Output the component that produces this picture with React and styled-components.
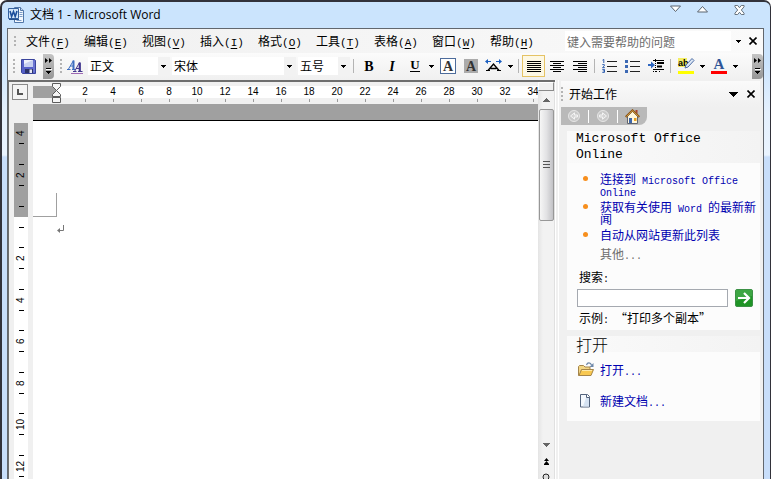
import React, { useState } from 'react';
import styled, { createGlobalStyle, css } from 'styled-components';

const GlobalStyle = createGlobalStyle`
    * {
        margin: 0;
        padding: 0;
        box-sizing: border-box;
    }

    body {
        background: white;
        color: black;
        font-family: 'Noto Sans CJK SC', sans-serif;
        font-size: 12px;
        line-height: 16px;
    }

    button, input, select {
        font: inherit;
        color: inherit;
        border: 0;
        background: none;
        outline: none;
    }

    a {
        color: inherit;
        text-decoration: none;
    }

    svg {
        display: block;
        flex: none;
    }
`;

const Latin = styled.span`
    font-family: 'Liberation Mono', monospace;
    font-size: ${(props) => props.$size || 10}px;
    line-height: 0;
`;

/* ---------- window frame ---------- */

const Window = styled.div`
    display: flex;
    flex-direction: column;
    height: calc(100vh - 19px);
    min-height: 300px;
    padding: 0 6px 0 5px;
    overflow: hidden;
    border: solid #32323a;
    border-width: 2px 1px 0 2px;
    border-radius: 7px 7px 0 0;
    background: linear-gradient(#cbe4fd 0, #cbe4fd 60px, #e4f0fd 110px, #e9f3fe 153px, #c8defa 155px);
`;

const TitleBar = styled.header`
    display: flex;
    align-items: flex-start;
    height: 26px;
    flex: none;
`;

const Title = styled.h1`
    flex: 1;
    display: flex;
    align-items: center;
    gap: 6px;
    height: 26px;
    padding-left: 1px;
    font-family: 'Open Sans', 'Noto Sans CJK SC', sans-serif;
    font-size: 12px;
    font-weight: 400;
`;

const WindowButtons = styled.div`
    display: flex;
    gap: 14px;
    padding-right: 18px;
`;

const WindowButton = styled.button`
    display: flex;
    justify-content: center;
    width: 13px;
    padding-top: 3px;

    &:last-child {
        margin-left: 10px;
    }
`;

const Client = styled.div`
    flex: 1;
    min-height: 0;
    display: flex;
    flex-direction: column;
    border: 1px solid #62676e;
    border-bottom: 0;
    background: #f0f0f0;
`;

/* ---------- menu and toolbar ---------- */

const MenuBar = styled.nav`
    display: flex;
    align-items: center;
    flex: none;
    height: 24px;
    padding: 0 2px 0 6px;
    background: linear-gradient(90deg, #f0f0f0, #fafafa);
`;

const Menus = styled.div`
    flex: 1;
    display: flex;
    margin-left: 9px;
`;

const MenuButton = styled.button`
    width: 58px;
    text-align: left;
    white-space: nowrap;

    u {
        text-underline-offset: 2px;
    }
`;

const HelpBox = styled.input`
    width: 166px;
    height: 20px;
    padding: 0 2px;
    background: white;

    &::placeholder {
        color: #6d6d6d;
        opacity: 1;
    }
`;

const ToolBar = styled.div`
    display: flex;
    align-items: center;
    flex: none;
    height: 27px;
    padding: 0 0 1px 5px;
    background: linear-gradient(#fbfbfb, #f0f0f0);
`;

const ToolButton = styled.button`
    display: flex;
    align-items: center;
    justify-content: center;
    flex: none;
    width: ${(props) => props.$width || 23}px;
    height: 22px;
    ${(props) => props.$active && css`
        border: 1px solid #e5c365;
        background: #fdf8e4;
    `}
`;

const Overflow = styled.button`
    display: flex;
    flex-direction: column;
    align-items: center;
    justify-content: space-between;
    flex: none;
    width: 11px;
    height: 25px;
    padding: 4px 0;
    border-radius: 0 4px 4px 0;
    background: linear-gradient(#c4c4c4, #969696);
`;

const Spacer = styled.span`
    flex: ${(props) => (props.$width ? 'none' : 1)};
    width: ${(props) => props.$width || 0}px;
`;

const Separator = styled.span`
    flex: none;
    width: 1px;
    height: 14px;
    margin: 0 3px;
    background: #b4b4b4;
`;

const Combo = styled.label`
    position: relative;
    flex: none;
    width: ${(props) => props.$width}px;
    height: 18px;
    margin-right: 2px;
    background: linear-gradient(90deg, white calc(100% - 12px), #f2f2f2 0);

    &:last-of-type {
        margin-right: 0;
    }

    select {
        width: 100%;
        height: 18px;
        padding-left: 2px;
        appearance: none;
    }

    svg {
        position: absolute;
        right: 4px;
        top: 8px;
        pointer-events: none;
    }
`;

/* ---------- document ---------- */

const Main = styled.main`
    flex: 1;
    min-height: 0;
    display: flex;
`;

const Editor = styled.section`
    flex: 1;
    min-width: 0;
    display: flex;
    border: solid #6e6e6e;
    border-width: 2px 0 0 1px;
`;

const RulerColumn = styled.div`
    display: flex;
    flex-direction: column;
    align-items: center;
    flex: none;
    width: 24px;
    padding: 2px 5px 0 3px;
`;

const TabStop = styled.button`
    display: flex;
    align-items: center;
    justify-content: center;
    flex: none;
    width: 16px;
    height: 16px;
    border: 1px solid #8a8a8a;
    background: #f4f4f4;
`;

const VerticalRuler = styled.div`
    flex: 1;
    min-height: 0;
    align-self: flex-end;
    display: grid;
    grid-template-rows: 31px 42px;
    grid-auto-rows: 42px 41px;
    width: 14px;
    margin-top: 23px;
    overflow: hidden;
    background: white;
    font: 10px/10px 'Liberation Sans', sans-serif;
`;

const VerticalMark = styled.div`
    display: flex;
    flex-direction: column;
    align-items: center;
    justify-content: flex-end;
    gap: 3px;
    padding-bottom: 10px;
    background: ${(props) => props.$shade};

    span {
        height: 14px;
        width: 10px;
        text-align: center;
        writing-mode: vertical-rl;
        transform: rotate(180deg);
    }

    &::before,
    &::after {
        content: '';
        flex: none;
        width: 5px;
        height: 1px;
        background: black;
    }

    &:first-child::before {
        display: none;
    }
`;

const PageColumn = styled.div`
    flex: 1;
    min-width: 0;
    display: flex;
    flex-direction: column;
    background: white;
`;

const HorizontalRuler = styled.div`
    display: flex;
    flex: none;
    height: 22px;
    padding-top: 4px;
    overflow: hidden;
    background: linear-gradient(#f0f0f0 4px, white 4px, white 16px, #f0f0f0 16px);
    font: 10px/12px 'Liberation Sans', sans-serif;
`;

const RulerMargin = styled.div`
    flex: none;
    display: flex;
    justify-content: flex-end;
    width: 38px;
    height: 12px;
    padding-right: 10px;
    background: linear-gradient(90deg, #a0a0a0 24px, white 24px);

    svg {
        margin-top: -3px;
    }
`;

const HorizontalMark = styled.div`
    flex: none;
    width: 28px;
    text-align: center;

    &::after {
        content: '';
        display: block;
        width: 1px;
        height: 3px;
        margin: 1px auto 0;
        background: #9a9a9a;
    }
`;

const PageGap = styled.div`
    flex: none;
    height: 17px;
    border-bottom: 1px solid black;
    background: #a0a0a0;
`;

const Page = styled.article`
    flex: 1;
    padding-top: 72px;
`;

const CropMark = styled.div`
    width: 24px;
    height: 24px;
    margin-bottom: 8px;
    border: solid #a0a0a0;
    border-width: 0 1px 1px 0;
`;

const Paragraph = styled.p`
    padding-left: 24px;
`;

const ScrollBar = styled.div`
    flex: none;
    display: flex;
    flex-direction: column;
    align-items: center;
    width: 17px;
    overflow: hidden;
    border-right: 1px solid #e0e0e0;
    background: linear-gradient(90deg, #e4e4e4, #f2f2f2 5px);
`;

const SplitHandle = styled.div`
    flex: none;
    width: 16px;
    height: 9px;
    border: 1px solid #8a8a8a;
    border-top-color: white;
    border-left-color: white;
    background: #f0f0f0;
`;

const ScrollButton = styled.button`
    display: flex;
    align-items: center;
    justify-content: center;
    flex: none;
    width: 16px;
    height: ${(props) => props.$height || 17}px;
`;

const ScrollTrack = styled.div`
    flex: 1;
    min-height: 0;
`;

const Thumb = styled.div`
    display: flex;
    align-items: center;
    justify-content: center;
    width: 15px;
    height: 112px;
    border: 1px solid #979797;
    border-radius: 2px;
    background: linear-gradient(90deg, #f6f6f6, #e2e2e4 50%, #c2c2c6);
`;

/* ---------- task pane ---------- */

const Pane = styled.aside`
    flex: none;
    width: 208px;
    padding: 1px 3px 0 5px;
    border-left: 1px solid white;
    background: linear-gradient(90deg, #f0f0f0 2px, white 2px, white 3px, #f0f0f0 3px);
    overflow: hidden;
`;

const PaneHeader = styled.div`
    display: flex;
    align-items: center;
    height: 26px;
    padding-right: 1px;
    background: linear-gradient(#fafafa, #f0f0f0);
`;

const PaneTitle = styled.h2`
    flex: 1;
    margin-left: 5px;
    font-size: 12px;
    font-weight: 400;
`;

const PaneNav = styled.div`
    display: flex;
    align-items: center;
    width: 86px;
    height: 18px;
    padding-left: 6px;
    border-radius: 0 0 8px 0;
    background: #b9b9b9;
    gap: 7px;
`;

const NavDivider = styled.span`
    width: 1px;
    height: 13px;
    background: white;
`;

const NavButton = styled.button`
    display: flex;
    align-items: center;
    justify-content: center;
    width: 14px;
`;

const Panel = styled.section`
    margin: 6px 0 0 6px;
`;

const PanelTitle = styled.h3`
    padding: 0 20px 0 9px;
    background: linear-gradient(90deg, #fafafa, #f3f3f3);
    font-size: 16px;
    font-weight: 300;
    line-height: 16px;
    ${(props) => props.$latin && css`
        font-family: 'Liberation Mono', monospace;
        font-size: 13px;
        font-weight: 400;
    `}
`;

const PanelBody = styled.div`
    padding: ${(props) => props.$padding};
    background: #fcfcfc;
    line-height: 12px;
`;

const Links = styled.ul`
    display: grid;
    gap: ${(props) => props.$gap}px;
    list-style: none;
`;

const LinkRow = styled.li`
    display: flex;
    align-items: ${(props) => (props.$icon ? 'center' : 'flex-start')};
    gap: ${(props) => (props.$icon ? 6 : 12)}px;
    height: ${(props) => (props.$icon ? '15px' : 'auto')};
    padding-left: ${(props) => (props.$icon ? 10 : 16)}px;
    color: #0000b0;

    a {
        flex: 1;
    }
`;

const Dot = styled.span`
    flex: none;
    width: 5px;
    height: 5px;
    margin-top: 3px;
    border-radius: 50%;
    background: #f78f1e;
`;

const More = styled.a`
    display: block;
    margin: 7px 0 11px 33px;

    && {
        color: #6d6d6d;
    }
`;

const SearchForm = styled.form`
    padding: 0 7px 0 10px;

    label, p {
        display: block;
        padding-left: 2px;
    }
`;

const SearchRow = styled.div`
    display: flex;
    gap: 7px;
    margin: 6px 0 5px;

    input {
        flex: 1;
        min-width: 0;
        height: 18px;
        padding: 0 2px;
        border: 1px solid #a5a9b0;
        background: white;
    }
`;

/* ---------- icons ---------- */

const Arrow = ({ w = 5, up, fill = 'black' }) => {
    const h = Math.ceil(w / 2);
    return (
        <svg width={w} height={h} viewBox={`0 0 ${w} ${h}`} shapeRendering="crispEdges">
            <path d={up ? `M0 ${h}H${w}L${w / 2} 0Z` : `M0 0H${w}L${w / 2} ${h}Z`} fill={fill} />
        </svg>
    );
};

const Cross = () => (
    <svg width="8" height="8" viewBox="0 0 8 8">
        <path d="M.5.5l7 7M7.5.5l-7 7" stroke="black" strokeWidth="1.6" />
    </svg>
);

const Grip = ({ rows = 4 }) => (
    <svg width="3" height={rows * 4 - 1} shapeRendering="crispEdges">
        {Array.from({ length: rows }, (_, i) => (
            <rect key={i} y={i * 4} width="2" height="2" fill="#b4b4b4" />
        ))}
    </svg>
);

const OverflowMarks = () => (
    <>
        <svg width="8" height="5" viewBox="0 0 8 5">
            <path d="M0 0v5l3-2.5zM4 0v5l3-2.5z" fill="black" />
        </svg>
        <svg width="7" height="8" viewBox="0 0 7 8" shapeRendering="crispEdges">
            <path d="M1 1h5v1H1zM1 4h5L3.500 7z" fill="black" />
            <path d="M1 2h6v1H1z" fill="white" />
        </svg>
    </>
);

const WordLogo = () => (
    <svg width="16" height="16" viewBox="0 0 16 16">
        <path d="M6.500.5h6l3 3v12h-9z" fill="#f4f8fd" stroke="#5277a8" />
        <path d="M12.500.5v3h3" fill="#c5d8ee" stroke="#5277a8" />
        <path d="M11.500 5.500h3M11.500 7.500h3M11.500 9.500h3M8.500 13.500h5" stroke="#7b9cc8" />
        <path d="M.5 1.500h10v10H.5z" fill="#d4e6f8" stroke="#35619f" />
        <path d="M2 4l1.600 5.500L5.500 4.500l1.700 5L9 4" fill="none" stroke="#1d4f9c" strokeWidth="1.600" />
        <path d="M1 12.500h10" stroke="#27508c" />
    </svg>
);

const SaveIcon = () => (
    <svg width="15" height="15" viewBox="0 0 15 15">
        <path d="M.5.5h13l1 1v13H1.500l-1-1z" fill="#5560c8" stroke="#3a449c" />
        <path d="M3 1h9v7H3z" fill="#eef1fb" />
        <path d="M3 5l9-4v7H3z" fill="#c6cff0" />
        <path d="M4 10h8v4H4z" fill="#2c3468" />
        <path d="M8.500 10.500h2.500V14H8.500z" fill="#e6e8f4" />
        <path d="M13 1.500v12" stroke="#8189dc" />
    </svg>
);

const StylesIcon = () => (
    <svg width="16" height="15" viewBox="0 0 16 15">
        <g fill="none" stroke="#3f6fc0">
            <path d="M1.500 10L6.500 1.500" />
            <path d="M6.500 1.500V10" strokeWidth="2" />
            <path d="M3 7h3.500M0 10.500h3.500M5 10.500h3" />
        </g>
        <g fill="none" stroke="#43388f">
            <path d="M7.500 12.500L12.500 3.500" />
            <path d="M12.800 3.500V12" strokeWidth="2.200" />
            <path d="M9 9.500h4M6 12.500h3.500M11 12.500h4.500" />
        </g>
        <path d="M4 14.500h12" stroke="#a06ab4" />
    </svg>
);

const Letter = ({ children, frame, shade, bar, color = 'black', italic, underline, size = 14 }) => (
    <svg width="18" height="18" viewBox="0 0 18 18">
        {frame && <rect x="1.500" y="1.500" width="15" height="15" fill="white" stroke="#4d6c9c" />}
        {shade && <rect x="2" y="2" width="14" height="14" fill="#ababab" />}
        <text
            x="9"
            y={bar || underline ? 12 : 14}
            textAnchor="middle"
            fontFamily="Liberation Serif, serif"
            fontSize={size}
            fontWeight="700"
            fontStyle={italic ? 'italic' : 'normal'}
            fill={color}
        >
            {children}
        </text>
        {underline && <path d="M4 14.500h10" stroke="black" />}
        {bar && <path d="M1 15.500h16" stroke="#f00" strokeWidth="3" />}
    </svg>
);

const ScaleIcon = () => (
    <svg width="17" height="14" viewBox="0 0 17 14">
        <path d="M3 11.500L8.500 5l5.500 6.500M5.500 9.500h6" fill="none" stroke="black" strokeWidth="1.400" />
        <path d="M1 11.500h4M12 11.500h4" stroke="black" />
        <path d="M1 2.500h5M11 2.500h5" stroke="#1b5fc0" />
        <path d="M0 2.500L3 0v5zM17 2.500L14 0v5z" fill="#1b5fc0" />
    </svg>
);

const AlignIcon = ({ short, right }) => (
    <svg width="14" height="11" viewBox="0 0 14 11" shapeRendering="crispEdges">
        {[0, 1, 2, 3, 4, 5].map((i) => {
            const w = i % 2 ? short : 14;
            const x = right ? 14 - w : (14 - w) / 2;
            return <rect key={i} x={x} y={i * 2} width={w} height="1" fill="black" />;
        })}
    </svg>
);

const ListIcon = ({ numbered }) => (
    <svg width="15" height="14" viewBox="0 0 15 14">
        <path d="M5 2.500h10M5 7.500h10M5 12.500h10" stroke="#222" />
        {numbered ? (
            <path
                d="M.5 1.200L1.800.4V4M.3 5.600h2v1.300L.5 8.600h2.300M.3 10.400h2.200v3H.3M.8 11.900h1.500"
                fill="none"
                stroke="#2f5fb0"
            />
        ) : (
            <path d="M0 1h3v3H0zM0 6h3v3H0zM0 11h3v3H0z" fill="#3c69b4" />
        )}
    </svg>
);

const IndentIcon = () => (
    <svg width="16" height="14" viewBox="0 0 16 14">
        <path d="M5 1.500h11M5 10.500h11" stroke="black" />
        <path d="M9 4h7M9 7.500h5" stroke="black" strokeWidth="2" />
        <path d="M5 12.500h2M8 12.500h2M11 12.500h2M7.500 0v14" stroke="black" strokeDasharray="1 1" />
        <path d="M0 5h3V2.500L7 6 3 9.500V7H0z" fill="#2f67c0" />
    </svg>
);

const HighlightIcon = () => (
    <svg width="18" height="18" viewBox="0 0 18 18">
        <rect x="1" y="1" width="9" height="9" fill="#f4ee62" />
        <text x="1" y="9" fontFamily="Liberation Sans, sans-serif" fontSize="9" fontWeight="700">ab</text>
        <path d="M15 1.500l2 2-6 6.500-3 1 1-3z" fill="#dbe6f4" stroke="#4d6ea6" />
        <path d="M1 15.500h16" stroke="#ff0" strokeWidth="3" />
    </svg>
);

const IndentMarker = () => (
    <svg width="9" height="21" viewBox="0 0 9 21" style={{ overflow: 'visible' }}>
        <path
            d="M.5.5h8v3L4.500 7.500.5 3.500zM.5 13.500v-2l4-4 4 4v2zM.5 14.500h8v5h-8z"
            fill="#f6f6f6"
            stroke="#5c5c5c"
        />
    </svg>
);

const RoundArrow = ({ flip }) => (
    <svg width="14" height="14" viewBox="0 0 14 14">
        <circle cx="7" cy="7" r="5.500" fill="#c9c9c9" stroke="#e6e6e6" />
        <path
            d={flip ? 'M3.500 6h3V3.800L10.500 7l-4 3.200V8h-3z' : 'M10.500 6h-3V3.800L3.500 7l4 3.200V8h3z'}
            fill="#d4d4d4"
            stroke="#f4f4f4"
        />
    </svg>
);

const HomeIcon = () => (
    <svg width="15" height="15" viewBox="0 0 15 15">
        <path d="M2.500 7v7.500h10V7L7.500 2.500z" fill="#fff6dc" stroke="#5f6470" />
        <path d="M10.500 1h2v4l-2-2z" fill="#a8402c" />
        <path d="M.7 8L7.500 1.300 14.300 8" fill="none" stroke="#8a5518" strokeWidth="2" />
        <path d="M1.500 7.500L7.500 1.800l6 5.700" fill="none" stroke="#e8b24c" strokeWidth=".8" />
        <path d="M4 9h3v5H4z" fill="#3c64a8" />
        <path d="M9 9h2.500v3H9z" fill="#e8a020" />
    </svg>
);

const FolderIcon = () => (
    <svg width="17" height="15" viewBox="0 0 17 15">
        <path d="M1.500 13.500V4.500l1-1h4l1.500 1.500h5v8.500z" fill="#f3d684" stroke="#a5854a" />
        <path d="M2 13.500l2.500-6h12l-2.500 6z" fill="#f8c850" stroke="#a5854a" />
        <path d="M5 8.500h10" stroke="#fde9a8" />
        <path d="M9.500 3c1-3 4-2.500 5 0" fill="none" stroke="#6c86a8" strokeWidth="1.200" />
        <path d="M16.500 1v4h-4z" fill="#6c86a8" />
    </svg>
);

const NewDocIcon = () => (
    <svg width="17" height="15" viewBox="0 0 17 15">
        <path d="M3.500 1.500h7l2 2v10.500h-9z" fill="#f4f8fd" stroke="#53637c" />
        <path d="M9 5h3v8.500H6z" fill="#d5e2f2" />
        <path d="M9.500 1.500v3h3" fill="white" stroke="#53637c" />
    </svg>
);

const GoIcon = () => (
    <svg width="18" height="18" viewBox="0 0 18 18">
        <rect x=".5" y=".5" width="17" height="17" rx="1.500" fill="#1f9426" stroke="#3c9146" />
        <path d="M1 1h16v6L1 12z" fill="#5cb860" opacity=".5" />
        <path d="M3 9h10.500M9 4l5 5-5 5" fill="none" stroke="white" strokeWidth="2.200" />
    </svg>
);

const ReturnMark = () => (
    <svg width="8" height="8" viewBox="0 0 8 8">
        <path d="M6.500 0v5.500H2" fill="none" stroke="#777" />
        <path d="M0 5.500L3 3v5z" fill="#777" />
    </svg>
);

/* ---------- data ---------- */

const menus = [
    ['文件', 'F'],
    ['编辑', 'E'],
    ['视图', 'V'],
    ['插入', 'I'],
    ['格式', 'O'],
    ['工具', 'T'],
    ['表格', 'A'],
    ['窗口', 'W'],
    ['帮助', 'H'],
];

const columns = Array.from({ length: 17 }, (_, i) => (i + 1) * 2);

const rows = [
    { label: '4', shade: '#a0a0a0' },
    { label: '2', shade: '#a0a0a0' },
    { label: '', shade: 'linear-gradient(#a0a0a0 50%, white 50%)' },
    ...[2, 4, 6, 8, 10, 12].map((label) => ({ label, shade: 'white' })),
];

const ComboBox = ({ label, width, options }) => (
    <Combo $width={width}>
        <select aria-label={label}>
            {options.map((option) => <option key={option}>{option}</option>)}
        </select>
        <Arrow />
    </Combo>
);

const App = () => {
    const [align, setAlign] = useState('justify');
    const [query, setQuery] = useState('');

    return (
        <>
            <GlobalStyle />
            <Window>
                <TitleBar>
                    <Title>
                        <WordLogo />
                        文档 1 - Microsoft Word
                    </Title>
                    <WindowButtons>
                        <WindowButton aria-label="最小化">
                            <svg width="13" height="8" viewBox="0 0 13 8">
                                <path d="M1.500 1h10l-5 5.500z" fill="white" stroke="#5b6470" />
                            </svg>
                        </WindowButton>
                        <WindowButton aria-label="最大化">
                            <svg width="13" height="8" viewBox="0 0 13 8">
                                <path d="M1.500 7h10l-5-5.500z" fill="white" stroke="#5b6470" />
                            </svg>
                        </WindowButton>
                        <WindowButton aria-label="关闭">
                            <svg width="11" height="10" viewBox="0 0 11 11">
                                <path
                                    d="M.5.5h3l2 2.500 2-2.500h3v1.500L7.500 5.500l3 3.500v1.500h-3l-2-2.500-2 2.500h-3V9l3-3.500-3-3.500z"
                                    fill="white"
                                    stroke="#5b6470"
                                />
                            </svg>
                        </WindowButton>
                    </WindowButtons>
                </TitleBar>

                <Client>
                    <MenuBar>
                        <Grip rows={3} />
                        <Menus>
                            {menus.map(([name, key]) => (
                                <MenuButton key={key}>
                                    {name}<Latin $size={11}>(<u>{key}</u>)</Latin>
                                </MenuButton>
                            ))}
                        </Menus>
                        <HelpBox aria-label="帮助" placeholder="键入需要帮助的问题" />
                        <ToolButton $width={14} aria-label="更多"><Arrow /></ToolButton>
                        <ToolButton $width={16} aria-label="关闭文档"><Cross /></ToolButton>
                    </MenuBar>

                    <ToolBar>
                        <Grip />
                        <Spacer $width={1} />
                        <ToolButton aria-label="保存"><SaveIcon /></ToolButton>
                        <Spacer $width={3} />
                        <Overflow aria-label="工具栏选项"><OverflowMarks /></Overflow>
                        <Spacer $width={6} />
                        <Grip />
                        <ToolButton aria-label="样式和格式"><StylesIcon /></ToolButton>
                        <Spacer $width={2} />
                        <ComboBox label="样式" width={82} options={['正文', '标题 1', '标题 2']} />
                        <ComboBox label="字体" width={124} options={['宋体', '黑体', '楷体']} />
                        <ComboBox label="字号" width={52} options={['五号', '小四', '四号']} />
                        <Separator />
                        <ToolButton aria-label="加粗"><Letter>B</Letter></ToolButton>
                        <ToolButton aria-label="倾斜"><Letter italic>I</Letter></ToolButton>
                        <ToolButton aria-label="下划线"><Letter underline size={13}>U</Letter></ToolButton>
                        <ToolButton $width={10} aria-label="下划线样式"><Arrow /></ToolButton>
                        <ToolButton aria-label="字符边框"><Letter frame color="#333">A</Letter></ToolButton>
                        <ToolButton aria-label="字符底纹"><Letter shade color="#333">A</Letter></ToolButton>
                        <ToolButton aria-label="字符缩放"><ScaleIcon /></ToolButton>
                        <ToolButton $width={10} aria-label="缩放比例"><Arrow /></ToolButton>
                        <Separator />
                        <ToolButton
                            aria-label="两端对齐"
                            $active={align === 'justify'}
                            onClick={() => setAlign('justify')}
                        >
                            <AlignIcon short={14} />
                        </ToolButton>
                        <ToolButton
                            aria-label="居中"
                            $active={align === 'center'}
                            onClick={() => setAlign('center')}
                        >
                            <AlignIcon short={8} />
                        </ToolButton>
                        <ToolButton
                            aria-label="右对齐"
                            $active={align === 'right'}
                            onClick={() => setAlign('right')}
                        >
                            <AlignIcon short={9} right />
                        </ToolButton>
                        <Separator />
                        <ToolButton aria-label="编号"><ListIcon numbered /></ToolButton>
                        <ToolButton aria-label="项目符号"><ListIcon /></ToolButton>
                        <ToolButton aria-label="增加缩进量"><IndentIcon /></ToolButton>
                        <Separator />
                        <ToolButton aria-label="突出显示"><HighlightIcon /></ToolButton>
                        <ToolButton $width={10} aria-label="突出显示颜色"><Arrow /></ToolButton>
                        <ToolButton aria-label="字体颜色"><Letter bar size={15} color="#2f5597">A</Letter></ToolButton>
                        <ToolButton $width={10} aria-label="选择字体颜色"><Arrow /></ToolButton>
                        <Spacer />
                        <Overflow aria-label="格式栏选项"><OverflowMarks /></Overflow>
                    </ToolBar>

                    <Main>
                        <Editor>
                            <RulerColumn>
                                <TabStop aria-label="制表符">
                                    <svg width="6" height="6" viewBox="0 0 6 6">
                                        <path d="M1 0v5h5" fill="none" stroke="#555" strokeWidth="2" />
                                    </svg>
                                </TabStop>
                                <VerticalRuler>
                                    {rows.map((row, i) => (
                                        <VerticalMark key={i} $shade={row.shade}>
                                            <span>{row.label}</span>
                                        </VerticalMark>
                                    ))}
                                </VerticalRuler>
                            </RulerColumn>
                            <PageColumn>
                                <HorizontalRuler>
                                    <RulerMargin><IndentMarker /></RulerMargin>
                                    {columns.map((n) => <HorizontalMark key={n}>{n}</HorizontalMark>)}
                                </HorizontalRuler>
                                <PageGap />
                                <Page>
                                    <CropMark />
                                    <Paragraph><ReturnMark /></Paragraph>
                                </Page>
                            </PageColumn>
                            <ScrollBar>
                                <SplitHandle />
                                <ScrollButton $height={18} aria-label="向上滚动"><Arrow w={7} up fill="#666" /></ScrollButton>
                                <ScrollTrack>
                                    <Thumb>
                                        <svg width="7" height="8" shapeRendering="crispEdges">
                                            <path d="M0 .5h7M0 3.500h7M0 6.500h7" stroke="#555" />
                                        </svg>
                                    </Thumb>
                                </ScrollTrack>
                                <ScrollButton aria-label="向下滚动"><Arrow w={7} fill="#666" /></ScrollButton>
                                <ScrollButton aria-label="前一页">
                                    <svg width="5" height="7" viewBox="0 0 5 7">
                                        <path d="M0 3h5L2.500 0zM0 6h5L2.500 3zM0 6h5v1H0z" fill="black" />
                                    </svg>
                                </ScrollButton>
                                <ScrollButton $height={9} aria-label="选择浏览对象">
                                    <svg width="8" height="8" viewBox="0 0 8 8" style={{ overflow: 'visible' }}>
                                        <circle cx="4" cy="6" r="3" fill="#ddd" stroke="#222" />
                                    </svg>
                                </ScrollButton>
                            </ScrollBar>
                        </Editor>

                        <Pane>
                            <PaneHeader>
                                <Grip />
                                <PaneTitle>开始工作</PaneTitle>
                                <ToolButton $width={18} aria-label="其他任务窗格"><Arrow w={9} /></ToolButton>
                                <ToolButton $width={17} aria-label="关闭任务窗格"><Cross /></ToolButton>
                            </PaneHeader>
                            <PaneNav>
                                <NavButton aria-label="后退"><RoundArrow /></NavButton>
                                <NavDivider />
                                <NavButton aria-label="前进"><RoundArrow flip /></NavButton>
                                <NavDivider />
                                <NavButton aria-label="主页"><HomeIcon /></NavButton>
                            </PaneNav>

                            <Panel>
                                <PanelTitle $latin>Microsoft Office Online</PanelTitle>
                                <PanelBody $padding="10px 0 6px">
                                    <Links $gap={4}>
                                        <LinkRow>
                                            <Dot />
                                            <a href="#online">连接到<Latin> Microsoft Office Online</Latin></a>
                                        </LinkRow>
                                        <LinkRow>
                                            <Dot />
                                            <a href="#news">获取有关使用<Latin> Word </Latin>的最新新闻</a>
                                        </LinkRow>
                                        <LinkRow>
                                            <Dot />
                                            <a href="#update">自动从网站更新此列表</a>
                                        </LinkRow>
                                    </Links>
                                    <More href="#more">其他<Latin>...</Latin></More>
                                    <SearchForm onSubmit={(e) => e.preventDefault()}>
                                        <label htmlFor="search">搜索<Latin>:</Latin></label>
                                        <SearchRow>
                                            <input
                                                id="search"
                                                value={query}
                                                onChange={(e) => setQuery(e.target.value)}
                                            />
                                            <button aria-label="开始搜索"><GoIcon /></button>
                                        </SearchRow>
                                        <p>示例<Latin>:  </Latin>“打印多个副本”</p>
                                    </SearchForm>
                                </PanelBody>
                            </Panel>

                            <Panel>
                                <PanelTitle>打开</PanelTitle>
                                <PanelBody $padding="10px 0 13px">
                                    <Links $gap={16}>
                                        <LinkRow $icon>
                                            <FolderIcon />
                                            <a href="#open">打开<Latin>...</Latin></a>
                                        </LinkRow>
                                        <LinkRow $icon>
                                            <NewDocIcon />
                                            <a href="#new">新建文档<Latin>...</Latin></a>
                                        </LinkRow>
                                    </Links>
                                </PanelBody>
                            </Panel>
                        </Pane>
                    </Main>
                </Client>
            </Window>
        </>
    );
};

export default App;
